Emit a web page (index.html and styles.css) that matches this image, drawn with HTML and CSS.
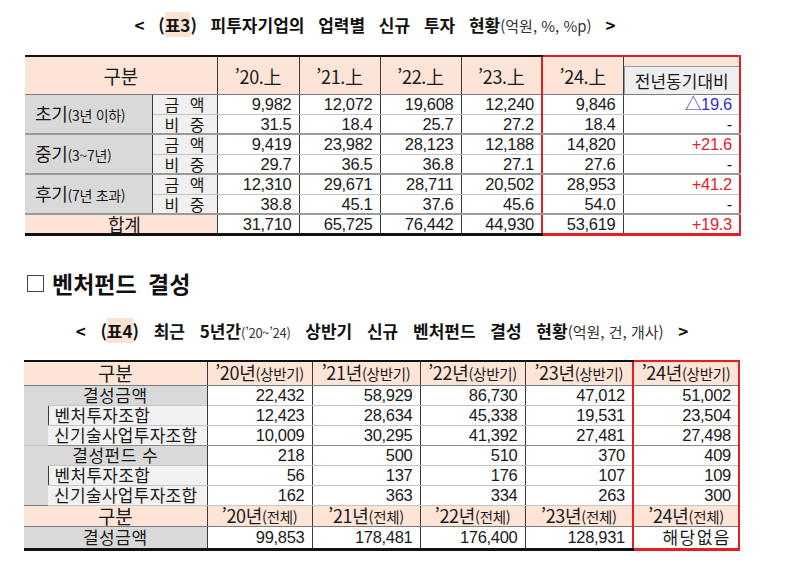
FILE: index.html
```html
<!DOCTYPE html>
<html lang="ko">
<head>
<meta charset="utf-8">
<title>피투자기업 업력별 신규 투자 현황</title>
<link rel="stylesheet" href="styles.css">
</head>
<body>
<div class="page">
  <h2 class="caption cap1">&lt; (<span class="hl">표3</span>) 피투자기업의 업력별 신규 투자 현황<span class="unit">(억원, %, %p)</span> &gt;</h2>

  <table class="t1">
    <colgroup>
      <col class="w127"><col class="w65"><col class="w82"><col class="w81"><col class="w81"><col class="w81"><col class="w81"><col class="w117">
    </colgroup>
    <thead>
      <tr>
        <th colspan="2" class="hd big">구분</th>
        <th class="hd">’20.上</th>
        <th class="hd">’21.上</th>
        <th class="hd">’22.上</th>
        <th class="hd">’23.上</th>
        <th class="hd rl">’24.上</th>
        <th class="hd rr cmp"><div class="cmpbox">전년동기대비</div></th>
      </tr>
    </thead>
    <tbody>
      <tr>
        <td rowspan="2" class="grp">초기<span class="sm">(3년 이하)</span></td>
        <td class="kind">금 액</td>
        <td>9,982</td><td>12,072</td><td>19,608</td><td>12,240</td><td class="rl">9,846</td><td class="rr blue">△19.6</td>
      </tr>
      <tr class="end">
        <td class="kind">비 중</td>
        <td>31.5</td><td>18.4</td><td>25.7</td><td>27.2</td><td class="rl">18.4</td><td class="rr">-</td>
      </tr>
      <tr>
        <td rowspan="2" class="grp">중기<span class="sm">(3~7년)</span></td>
        <td class="kind">금 액</td>
        <td>9,419</td><td>23,982</td><td>28,123</td><td>12,188</td><td class="rl">14,820</td><td class="rr red">+21.6</td>
      </tr>
      <tr class="end">
        <td class="kind">비 중</td>
        <td>29.7</td><td>36.5</td><td>36.8</td><td>27.1</td><td class="rl">27.6</td><td class="rr">-</td>
      </tr>
      <tr>
        <td rowspan="2" class="grp">후기<span class="sm">(7년 초과)</span></td>
        <td class="kind">금 액</td>
        <td>12,310</td><td>29,671</td><td>28,711</td><td>20,502</td><td class="rl">28,953</td><td class="rr red">+41.2</td>
      </tr>
      <tr class="end">
        <td class="kind">비 중</td>
        <td>38.8</td><td>45.1</td><td>37.6</td><td>45.6</td><td class="rl">54.0</td><td class="rr">-</td>
      </tr>
      <tr class="total">
        <td colspan="2" class="sum">합계</td>
        <td>31,710</td><td>65,725</td><td>76,442</td><td>44,930</td><td class="rl">53,619</td><td class="rr red">+19.3</td>
      </tr>
    </tbody>
  </table>

  <h3 class="section"><span class="box"></span>벤처펀드 결성</h3>

  <h2 class="caption cap2">&lt; (<span class="hl">표4</span>) 최근 5년간<span class="unit us">(’20~’24)</span> 상반기 신규 벤처펀드 결성 현황<span class="unit">(억원, 건, 개사)</span> &gt;</h2>

  <table class="t2">
    <colgroup>
      <col class="w24"><col class="w159"><col class="w105"><col class="w108"><col class="w105"><col class="w108"><col class="w106">
    </colgroup>
    <tbody>
      <tr class="head first">
        <th colspan="2" class="hd big">구분</th>
        <th class="hd">’20년<span class="sm">(상반기)</span></th>
        <th class="hd">’21년<span class="sm">(상반기)</span></th>
        <th class="hd">’22년<span class="sm">(상반기)</span></th>
        <th class="hd">’23년<span class="sm">(상반기)</span></th>
        <th class="hd rl rr">’24년<span class="sm">(상반기)</span></th>
      </tr>
      <tr>
        <td colspan="2" class="main">결성금액</td>
        <td>22,432</td><td>58,929</td><td>86,730</td><td>47,012</td><td class="rl rr">51,002</td>
      </tr>
      <tr>
        <td rowspan="2" class="indent"></td>
        <td class="sub">벤처투자조합</td>
        <td>12,423</td><td>28,634</td><td>45,338</td><td>19,531</td><td class="rl rr">23,504</td>
      </tr>
      <tr class="end">
        <td class="sub">신기술사업투자조합</td>
        <td>10,009</td><td>30,295</td><td>41,392</td><td>27,481</td><td class="rl rr">27,498</td>
      </tr>
      <tr>
        <td colspan="2" class="main">결성펀드 수</td>
        <td>218</td><td>500</td><td>510</td><td>370</td><td class="rl rr">409</td>
      </tr>
      <tr>
        <td rowspan="2" class="indent"></td>
        <td class="sub">벤처투자조합</td>
        <td>56</td><td>137</td><td>176</td><td>107</td><td class="rl rr">109</td>
      </tr>
      <tr>
        <td class="sub">신기술사업투자조합</td>
        <td>162</td><td>363</td><td>334</td><td>263</td><td class="rl rr">300</td>
      </tr>
      <tr class="head">
        <th colspan="2" class="hd big">구분</th>
        <th class="hd">’20년<span class="sm">(전체)</span></th>
        <th class="hd">’21년<span class="sm">(전체)</span></th>
        <th class="hd">’22년<span class="sm">(전체)</span></th>
        <th class="hd">’23년<span class="sm">(전체)</span></th>
        <th class="hd rl rr">’24년<span class="sm">(전체)</span></th>
      </tr>
      <tr class="total">
        <td colspan="2" class="main">결성금액</td>
        <td>99,853</td><td>178,481</td><td>176,400</td><td>128,931</td><td class="rl rr na">해당없음</td>
      </tr>
    </tbody>
  </table>
</div>
</body>
</html>
```

FILE: styles.css
```css
* { box-sizing: border-box; }
html, body { margin: 0; padding: 0; background: #ffffff; }
body {
  font-family: "Noto Sans CJK KR", "Noto Sans", sans-serif;
  color: #1a1a1a;
}
.page { width: 716px; margin-left: 24px; }

/* captions */
.caption {
  margin: 0;
  font-size: 17px;
  font-weight: 700;
  line-height: 22px;
  text-align: center;
  word-spacing: 9px;
  color: #111;
  white-space: nowrap;
}
.cap1 { height: 55px; padding-top: 14px; padding-right: 14px; }
.cap2 { height: 62px; padding-top: 22px; word-spacing: 10px; }
.hl { background: #fbe2d2; }
.unit {
  font-size: 15px;
  font-weight: 400;
  word-spacing: 0;
  letter-spacing: 0;
  color: #333;
}
.us { font-size: 13px; letter-spacing: -0.3px; }

/* section heading */
.section {
  display: flex;
  align-items: center;
  gap: 8px;
  height: 30px;
  margin: 32px 0 0 3px;
  font-size: 23px;
  font-weight: 700;
  line-height: 30px;
  word-spacing: 5px;
  color: #111;
}
.box {
  display: inline-block;
  width: 17px;
  height: 17px;
  border: 1.5px solid #444;
  background: #fff;
}

/* tables common */
table { border-collapse: collapse; table-layout: fixed; }
th, td {
  padding: 0 7px;
  font-family: "Liberation Sans", "Noto Sans CJK KR", sans-serif;
  font-size: 16.5px;
  font-weight: 400;
  line-height: 18px;
  letter-spacing: -0.3px;
  text-align: right;
  white-space: nowrap;
  border-left: 1px solid #3a3a3a;
  border-right: 1px solid #3a3a3a;
  border-top: 1px solid #c4c4c4;
  border-bottom: 1px solid #c4c4c4;
  background: #ffffff;
}
th.hd, .grp, .kind, .sum, .main, .sub, .cmpbox, .na {
  font-family: "Noto Sans CJK KR", "Noto Sans", sans-serif;
}
th.hd {
  background: #fce4d6;
  text-align: center;
  font-size: 18px;
  border-bottom: 1px solid #7a7a7a;
}
th.big { font-size: 19px; }
th:first-child, td:first-child { border-left: none; }
.sm { font-size: 14.5px; letter-spacing: -0.3px; }

.w127 { width: 127px; } .w65 { width: 65px; } .w82 { width: 82px; }
.w81 { width: 81px; } .w117 { width: 117px; }
.w24 { width: 24px; } .w159 { width: 159px; } .w105 { width: 105px; }
.w108 { width: 108px; } .w106 { width: 106px; }

/* table 1 */
.t1 { width: 715px; margin-left: 1px; }
.t1 thead th { height: 38px; border-top: 2px solid #111; padding-top: 1px; }
.t1 tbody tr { height: 20px; }
.t1 td { height: 20px; }
.grp {
  background: #d9d9d9;
  text-align: left;
  padding-left: 10px;
  font-size: 18px;
  border-bottom: 2px solid #9a9a9a;
}
.grp .sm { font-size: 14px; }
.kind {
  background: #f0f0f0;
  text-align: center;
  font-size: 16px;
  letter-spacing: 0;
  word-spacing: 6px;
  border-left: 1px solid #3a3a3a;
}
.end td { border-bottom: 2px solid #9a9a9a; }
.sum {
  background: #fce4d6;
  text-align: center;
  font-size: 18px;
  padding-right: 0;
}
.total td { border-bottom: 3px solid #111; }
.blue { color: #2f2fc8; }
.red { color: #e0242c; }

.cmp { padding: 0; vertical-align: bottom; }
.cmpbox {
  height: 28px;
  line-height: 27px;
  background: #efefef;
  border-top: 1px solid #9a9a9a;
  border-left: 1px solid #9a9a9a;
  font-size: 17px;
  letter-spacing: 0;
  text-align: center;
}

/* red highlight frame */
th.rl, td.rl { border-left: 2px solid #e01f26; }
th.rr, td.rr { border-right: 2px solid #e01f26; }
.t1 thead th.rl, .t1 thead th.rr { border-top: 2px solid #e01f26; }
.t1 .total td.rl, .t1 .total td.rr { border-bottom: 3px solid #e01f26; }

/* table 2 */
.t2 { width: 715px; }
.t2 tr { height: 20px; }
.t2 .head th { height: 21px; border-top: 1px solid #7a7a7a; }
.t2 .first th { height: 24px; border-top: 2px solid #111; }
.t2 .first th.rl { border-top: 2px solid #e01f26; }
.main {
  background: #d9d9d9;
  text-align: center;
  font-size: 17px;
  letter-spacing: 0.5px;
  border-bottom: none;
}
.indent {
  background: #d9d9d9;
  border-top: none;
  border-bottom: none;
  border-right: none;
  padding: 0;
}
.sub {
  background: #f2f2f2;
  text-align: left;
  padding-left: 6px;
  font-size: 17px;
  letter-spacing: 0.3px;
  border-left: 1px solid #3a3a3a;
}
.t2 .end td { border-bottom: 1px solid #8a8a8a; }
.t2 .total td { height: 23px; border-bottom: 3px solid #111; }
.t2 .total td.rl { border-bottom: 3px solid #e01f26; }
.na { letter-spacing: 1.5px; font-size: 17px; }
```
